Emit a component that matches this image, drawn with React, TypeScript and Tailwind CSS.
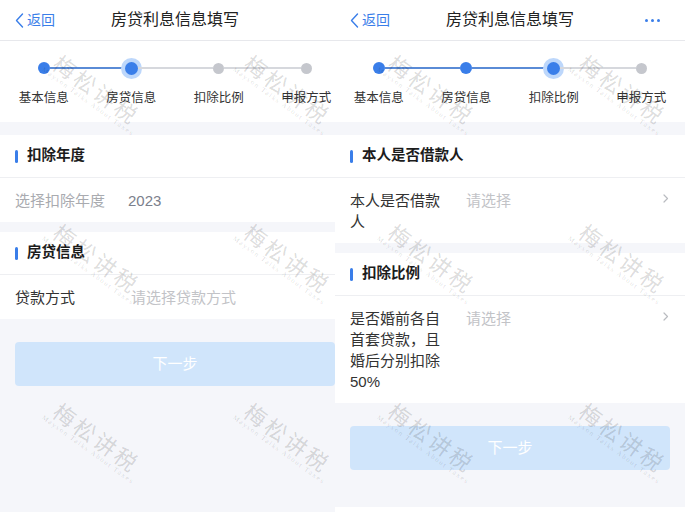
import type { ReactNode } from "react";

const steps = ["基本信息", "房贷信息", "扣除比例", "申报方式"];

const blue = "bg-[#3a7ee9]";

type Row = {
  label: string;
  labelClass: string;
  value: string;
  valueClass: string;
  arrow?: boolean;
};

type Section = { title: string; rows: Row[] };

const leftSections: Section[] = [
  {
    title: "扣除年度",
    rows: [
      {
        label: "选择扣除年度",
        labelClass: "text-[#a9abb0]",
        value: "2023",
        valueClass: "text-[#7b808c] -ml-[3px]",
      },
    ],
  },
  {
    title: "房贷信息",
    rows: [
      {
        label: "贷款方式",
        labelClass: "text-[#333333]",
        value: "请选择贷款方式",
        valueClass: "text-[#c2c3c7]",
      },
    ],
  },
];

const rightSections: Section[] = [
  {
    title: "本人是否借款人",
    rows: [
      {
        label: "本人是否借款人",
        labelClass: "text-[#333333]",
        value: "请选择",
        valueClass: "text-[#c2c3c7]",
        arrow: true,
      },
    ],
  },
  {
    title: "扣除比例",
    rows: [
      {
        label: "是否婚前各自首套贷款，且婚后分别扣除50%",
        labelClass: "text-[#333333]",
        value: "请选择",
        valueClass: "text-[#c2c3c7]",
        arrow: true,
      },
    ],
  },
];

const watermarkSpots = [
  "left-[95px] top-[92px]",
  "left-[286px] top-[92px]",
  "left-[95px] top-[261px]",
  "left-[286px] top-[261px]",
  "left-[95px] top-[440px]",
  "left-[286px] top-[440px]",
];

export default function App() {
  return (
    <div className="flex h-[512px] w-[700px] overflow-hidden bg-white font-['Liberation_Sans','Noto_Sans_CJK_SC',sans-serif]">
      <div className="h-[512px] w-[335px] shrink-0 overflow-hidden">
        <Screen active={1} sections={leftSections} />
      </div>
      <div className="h-[507px] w-[350px] shrink-0 overflow-hidden">
        <Screen active={2} sections={rightSections} showMore />
      </div>
    </div>
  );
}

function Screen({ active, sections, showMore }: { active: number; sections: Section[]; showMore?: boolean }) {
  return (
    <div className="relative h-[512px] w-[350px] bg-[#f5f6fa]">
      <Header showMore={showMore} />
      <Steps active={active} />
      <div className="flex flex-col gap-[10px] pt-[13px]">
        {sections.map((section) => (
          <Card key={section.title} section={section} />
        ))}
      </div>
      <div className="mx-[15px] mt-[23px] flex h-[44px] items-center justify-center rounded-[4px] bg-[#d0e5fb] text-[15px] text-white">
        下一步
      </div>
      {watermarkSpots.map((spot) => (
        <Watermark key={spot} spot={spot} />
      ))}
    </div>
  );
}

function Header({ showMore }: { showMore?: boolean }) {
  return (
    <div className="grid h-[41px] grid-cols-[1fr_auto_1fr] items-center border-b border-[#e7e8ec] bg-white px-[15px]">
      <div className="flex items-center gap-[3px] text-[14px] text-[#3a7ee9]">
        <svg width="9" height="15" viewBox="0 0 9 15" fill="none">
          <path d="M7.5 1 1.5 7.5l6 6.5" stroke="#3a7ee9" strokeWidth="1.4" strokeLinecap="round" strokeLinejoin="round" />
        </svg>
        <span>返回</span>
      </div>
      <div className="text-[16px] text-[#222222]">房贷利息信息填写</div>
      <div className="flex justify-end pr-[10px]">
        {showMore ? (
          <div className="flex gap-[3px]">
            <span className={`h-[3px] w-[3px] rounded-full ${blue}`} />
            <span className={`h-[3px] w-[3px] rounded-full ${blue}`} />
            <span className={`h-[3px] w-[3px] rounded-full ${blue}`} />
          </div>
        ) : null}
      </div>
    </div>
  );
}

function Steps({ active }: { active: number }) {
  return (
    <div className="grid grid-cols-4 bg-white pb-[16px] pt-[21px]">
      {steps.map((label, index) => (
        <div key={label} className="flex flex-col items-center">
          <div className="flex h-[12px] w-full items-center">
            <span className={`h-[1.5px] flex-1 ${index === 0 ? "bg-transparent" : index <= active ? "bg-[#5a8bd6]" : "bg-[#d6d8dd]"}`} />
            <Dot state={index < active ? "done" : index === active ? "active" : "todo"} />
            <span
              className={`h-[1.5px] flex-1 ${index === steps.length - 1 ? "bg-transparent" : index < active ? "bg-[#5a8bd6]" : "bg-[#d6d8dd]"}`}
            />
          </div>
          <span className="mt-[16px] text-[12.5px] leading-[16px] text-[#333333]">{label}</span>
        </div>
      ))}
    </div>
  );
}

function Dot({ state }: { state: "done" | "active" | "todo" }) {
  if (state === "todo") return <span className="h-[11px] w-[11px] shrink-0 rounded-full bg-[#c5c7cd]" />;
  if (state === "active")
    return <span className={`h-[13px] w-[13px] shrink-0 rounded-full ${blue} ring-4 ring-[#bdd7fb]`} />;
  return <span className={`h-[12px] w-[12px] shrink-0 rounded-full ${blue}`} />;
}

function Card({ section }: { section: Section }) {
  return (
    <div className="bg-white">
      <div className="flex h-[43px] items-center border-b border-[#eeeff2] px-[15px]">
        <span className={`mr-[9px] h-[13px] w-[3px] rounded-full ${blue}`} />
        <span className="text-[14.5px] font-bold text-[#1c1c1c]">{section.title}</span>
      </div>
      {section.rows.map((row) => (
        <FormRow key={row.label} row={row} />
      ))}
    </div>
  );
}

function FormRow({ row }: { row: Row }) {
  return (
    <div className="flex items-start py-[11.5px] pl-[15px] pr-[16px] text-[15px] leading-[21px]">
      <span className={`mr-[16px] w-[100px] shrink-0 ${row.labelClass}`}>{row.label}</span>
      <span className={`flex-1 ${row.valueClass}`}>{row.value}</span>
      {row.arrow ? <Chevron /> : null}
    </div>
  );
}

function Chevron(): ReactNode {
  return (
    <span className="flex h-[17px] items-center">
      <svg width="6" height="9" viewBox="0 0 6 9" fill="none">
        <path d="M1 1l3.5 3.5L1 8" stroke="#b9bbc0" strokeWidth="1.2" strokeLinecap="round" strokeLinejoin="round" />
      </svg>
    </span>
  );
}

function Watermark({ spot }: { spot: string }) {
  return (
    <div className={`pointer-events-none absolute ${spot} -translate-x-1/2 -translate-y-1/2 rotate-[36deg]`}>
      <div className="flex flex-col items-center whitespace-nowrap text-black/[0.15]">
        <span className="font-['Noto_Sans_CJK_SC',sans-serif] text-[22px] leading-[24px] tracking-[3px]">梅松讲税</span>
        <span className="font-['Liberation_Serif',serif] text-[7px] leading-[8px] tracking-[1.5px]">
          Mayson Talks About Taxes
        </span>
      </div>
    </div>
  );
}
